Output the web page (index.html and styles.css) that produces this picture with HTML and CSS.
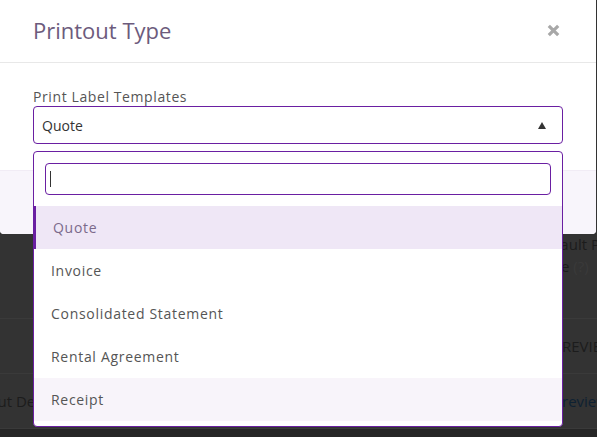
FILE: index.html
```html
<!DOCTYPE html>
<html lang="en">
<head>
<meta charset="utf-8">
<title>Printout Type</title>
<link rel="stylesheet" href="styles.css">
</head>
<body>
<div class="page">
  <div class="row row-tall">
    <div class="cell-left"></div>
    <div class="cell-right">
      <div class="bg-text">Default Printout</div>
      <div class="bg-text">Type <span class="hint">(?)</span></div>
    </div>
  </div>
  <div class="row">
    <div class="cell-left"></div>
    <div class="cell-right cell-shift"><span class="bg-text">PREVIEW</span></div>
  </div>
  <div class="row">
    <div class="cell-left"><span class="bg-text">Printout Details</span></div>
    <div class="cell-right cell-shift"><span class="bg-link">Preview</span></div>
  </div>
  <div class="page-bottom"></div>
</div>

<div class="modal">
  <div class="modal-header">
    <h4 class="modal-title">Printout Type</h4>
    <button class="close" type="button" aria-label="Close">
      <svg width="13" height="13" viewBox="0 0 13 13"><path d="M1.8 1.8 L11.2 11.2 M11.2 1.8 L1.8 11.2" stroke="#a8a8a8" stroke-width="3.2" stroke-linecap="butt"/></svg>
    </button>
  </div>
  <div class="modal-body">
    <label class="field-label">Print Label Templates</label>
    <div class="select-wrap">
      <div class="select">
        <span class="select-value">Quote</span>
        <span class="arrow"></span>
      </div>
      <div class="dropdown">
        <div class="search-box">
          <input class="search" type="text" aria-label="Search">
          <span class="caret"></span>
        </div>
        <ul class="options">
          <li class="option selected">Quote</li>
          <li class="option">Invoice</li>
          <li class="option">Consolidated Statement</li>
          <li class="option">Rental Agreement</li>
          <li class="option hovered">Receipt</li>
          <li class="option">Packing Slip</li>
          <li class="option">Delivery Note</li>
        </ul>
      </div>
    </div>
  </div>
  <div class="modal-footer"></div>
</div>
</body>
</html>
```

FILE: styles.css
```css
* { box-sizing: border-box; }

html, body {
  margin: 0;
  padding: 0;
}

body {
  width: 597px;
  height: 437px;
  overflow: hidden;
  background: #333333;
  font-family: "Open Sans", "Liberation Sans", sans-serif;
  position: relative;
}

/* background page under overlay */
.page {
  padding-top: 233px;
}

.row {
  display: grid;
  grid-template-columns: 78px 503px auto;
  margin-left: -45px;
  height: 55px;
  border-bottom: 1px solid #3a3a3a;
  align-items: center;
  white-space: nowrap;
}

.row-tall {
  height: 86px;
  align-items: start;
}

.cell-left {
  overflow: hidden;
}

.cell-right {
  grid-column: 3;
}

.bg-text {
  font-size: 15px;
  line-height: 22px;
  color: #1c1c1c;
}

.hint {
  color: #3a3a3a;
}

.bg-link {
  font-size: 15px;
  line-height: 22px;
  color: #0e2132;
}

.cell-shift {
  padding-left: 17px;
}

.page-bottom {
  height: 12px;
  background: #262626;
}

/* modal */
.modal {
  position: absolute;
  top: 0;
  left: 0;
  width: 596px;
  height: 234px;
  background: #ffffff;
  border-radius: 0 0 4px 4px;
  display: flex;
  flex-direction: column;
}

.modal-header {
  height: 63px;
  border-bottom: 1px solid #e8e8e8;
  display: flex;
  align-items: center;
  justify-content: space-between;
  padding: 0 36px 2px 33px;
}

.modal-title {
  margin: 0;
  font-size: 22px;
  font-weight: 400;
  line-height: 30px;
  color: #6c5b7c;
}

.close {
  border: 0;
  background: none;
  padding: 0;
  width: 13px;
  height: 13px;
  display: flex;
}

.modal-body {
  padding: 25px 33px 26px 33px;
}

.field-label {
  display: block;
  font-size: 14px;
  line-height: 18px;
  letter-spacing: 0.6px;
  color: #555555;
}

.select-wrap {
  position: relative;
  width: 530px;
}

.select {
  height: 38px;
  border: 1px solid #6a1fa2;
  border-radius: 4px;
  display: flex;
  align-items: center;
  justify-content: space-between;
  padding: 0 16px 0 8px;
}

.select-value {
  font-size: 14px;
  color: #333333;
}

.arrow {
  width: 0;
  height: 0;
  border-left: 4.5px solid transparent;
  border-right: 4.5px solid transparent;
  border-bottom: 7px solid #333333;
  margin-top: 1px;
}

.modal-footer {
  flex: 1;
  background: #f8f5fb;
  border-top: 1px solid #f1ecf5;
  border-radius: 0 0 4px 4px;
}

/* dropdown panel */
.dropdown {
  position: absolute;
  top: 45px;
  left: 0;
  width: 530px;
  height: 276px;
  background: #ffffff;
  border: 1px solid #6a1fa2;
  border-radius: 4px;
  z-index: 2;
  display: flex;
  flex-direction: column;
}

.search-box {
  position: relative;
  margin: 11px;
}

.search {
  display: block;
  width: 100%;
  height: 32px;
  border: 1px solid #6a1fa2;
  border-radius: 4px;
  outline: none;
  padding: 0 6px;
  font-family: inherit;
  font-size: 14px;
}

.caret {
  position: absolute;
  left: 5px;
  top: 8px;
  width: 1px;
  height: 16px;
  background: #333333;
}

.options {
  list-style: none;
  margin: 0;
  padding: 0;
  height: 220px;
  overflow-y: scroll;
}

.options::-webkit-scrollbar {
  width: 6px;
}

.options::-webkit-scrollbar-track {
  background: #f6f8fb;
}

.options::-webkit-scrollbar-thumb {
  background: #c1c1c1;
}

.option {
  height: 43px;
  display: flex;
  align-items: center;
  padding-left: 17px;
  font-size: 14px;
  letter-spacing: 0.7px;
  color: #555555;
}

.option.selected {
  background: #efe7f6;
  border-left: 3px solid #6a1fa2;
  color: #7b6a8b;
  margin-left: -1px;
  padding-left: 17px;
}

.option.hovered {
  background: #f8f4fa;
}
```
